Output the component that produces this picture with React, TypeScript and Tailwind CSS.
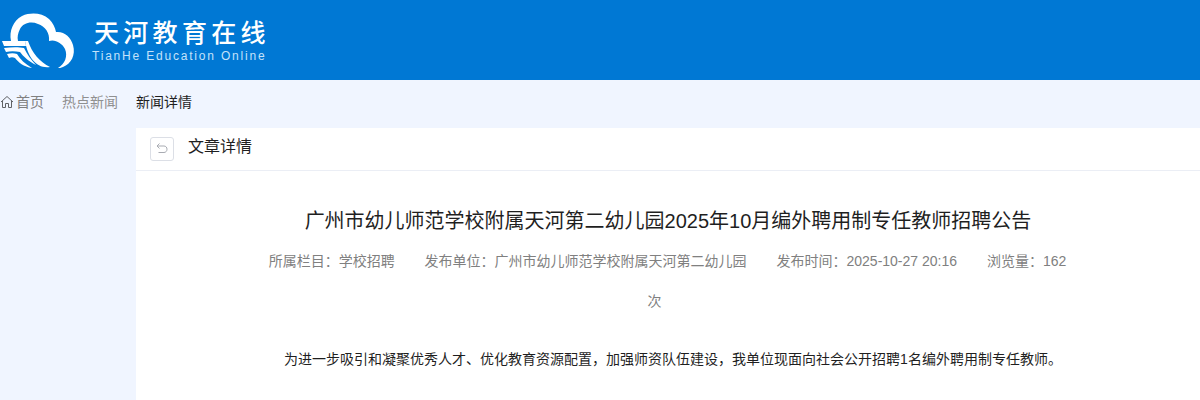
import React from "react";

const cjk = "font-['Liberation_Sans','Noto_Sans_CJK_SC',sans-serif]";

const Logo = () => (
  <svg width="76" height="64" viewBox="0 0 76 64" className="shrink-0">
    <path
      d="M11 33 C9 23 13 13 22 8 C31 4 42 5 49 11 C53 15 55 19 56 24 C64 23 71 29 73 37 C76 47 71 56 63 59 C61 60 59 60 58 60 C65 56 68 48 65 41 C62 35 55 31 49 33 C50 25 45 18 38 16 C31 13 23 15 20 21 C18 25 17 29 18 33 Z"
      fill="#fff"
    />
    <path d="M28 33 C32 45 40 54 50 59 C37 61 28 50 25 33 Z" fill="#fff" />
    <path d="M2 33 H25 L26 38 H4 Z" fill="#fff" />
    <path d="M4 40 C12 39 19 39 24 40 C27 46 31 52 36 57 C28 53 23 48 20 44 C15 43 10 43 6 44 Z" fill="#fff" />
    <path d="M7 46 C11 45 14 45 17 46 C20 51 25 56 32 60 C24 59 18 54 15 50 C13 49 11 49 9 50 Z" fill="#fff" />
  </svg>
);

const App: React.FC = () => {
  return (
    <div className={`h-[400px] overflow-hidden bg-[#f0f5ff] ${cjk}`}>
      <header className="h-20 bg-[#0078d4] flex items-center">
        <Logo />
        <div className="ml-4 flex flex-col items-start">
          <div className="ml-[2px] text-white text-[25px] leading-[30px] tracking-[4.3px] font-medium font-['Noto_Sans_CJK_SC',serif] -mt-[2px]">
            天河教育在线
          </div>
          <div className="text-[#c4e2fa] text-xs leading-[14px] tracking-[1.8px] mt-[3px]">
            TianHe Education Online
          </div>
        </div>
      </header>

      <nav className="h-12 flex items-center text-sm pb-1">
        <svg width="14" height="14" viewBox="0 0 14 14" fill="none" stroke="#606266" strokeWidth="1" className="mr-[2px]">
          <path d="M1 7 L7 1.5 L13 7 M2.5 6 V12.5 H5.5 V8.5 H8.5 V12.5 H11.5 V6" />
        </svg>
        <span className="text-[#808080]">首页</span>
        <span className="ml-[18px] text-[#909090]">热点新闻</span>
        <span className="ml-[18px] text-[#1f1f1f]">新闻详情</span>
      </nav>

      <div className="flex">
        <aside className="w-[136px] shrink-0" />
        <main className="flex-1 bg-white h-[272px]">
          <div className="h-[43px] flex items-center border-b border-[#ebeef5] pl-[14px]">
            <button className="w-6 h-6 border border-[#dcdfe6] rounded-[3px] flex items-center justify-center mr-[14px]">
              <svg width="12" height="12" viewBox="0 0 12 12" fill="none" stroke="#a8abb2" strokeWidth="1">
                <path d="M3.5 0.5 L1 3 L3.5 5.5 M1 3 H8 C9.8 3 11 4.5 11 6.2 C11 8 9.8 9.5 8 9.5 H2.5" />
              </svg>
            </button>
            <span className="text-base leading-5 text-[#1f1f1f] -mt-[4px]">文章详情</span>
          </div>
          <h1 className="text-xl leading-7 text-[#1f1f1f] text-center mt-[36px]">
            广州市幼儿师范学校附属天河第二幼儿园2025年10月编外聘用制专任教师招聘公告
          </h1>
          <div className="text-sm leading-10 text-[#808080] text-center mt-[6px] pl-[129px] pr-[130px]">
            <span className="mr-[26px]">所属栏目：学校招聘</span>{" "}
            <span className="mr-[26px]">发布单位：广州市幼儿师范学校附属天河第二幼儿园</span>{" "}
            <span className="mr-[26px]">发布时间：2025-10-27 20:16</span>{" "}
            <span className="mr-[26px]">浏览量：162次</span>
          </div>
          <p className="text-sm leading-6 text-[#1f1f1f] text-center mt-[26px] pl-[10px]">
            为进一步吸引和凝聚优秀人才、优化教育资源配置，加强师资队伍建设，我单位现面向社会公开招聘1名编外聘用制专任教师。
          </p>
        </main>
      </div>
    </div>
  );
};

export default App;
